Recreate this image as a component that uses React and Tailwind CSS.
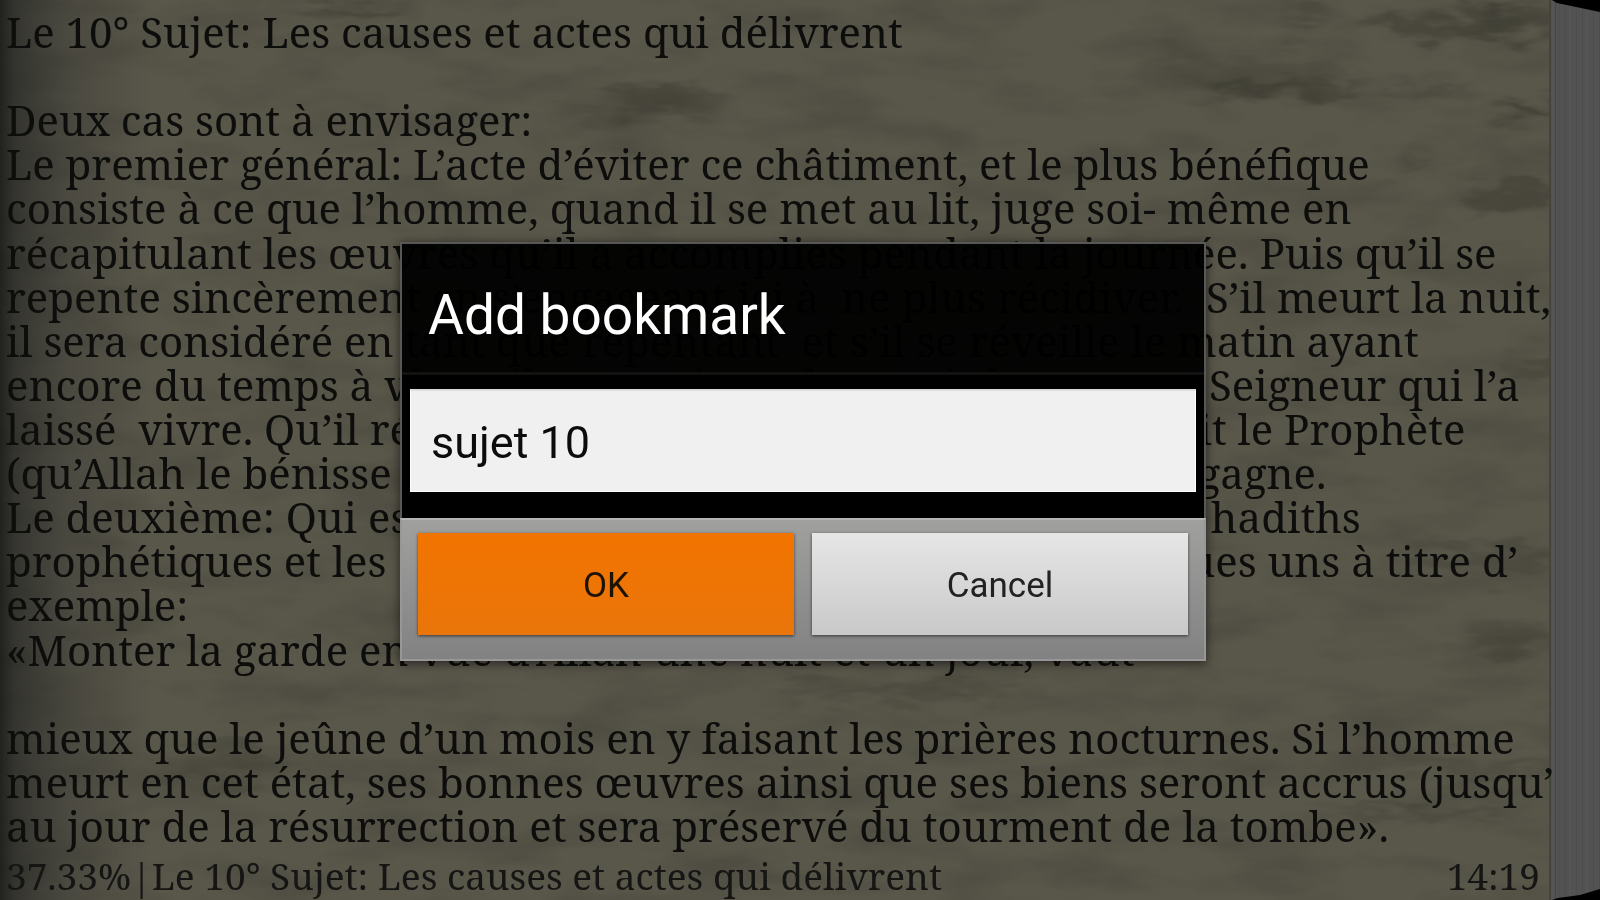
import React, { useState } from "react";

// Lines of the current page, already broken by the reader
const LINES = [
  "Le 10° Sujet: Les causes et actes qui délivrent",
  "",
  "Deux cas sont à envisager:",
  "Le premier général: L’acte d’éviter ce châtiment, et le plus bénéfique",
  "consiste à ce que l’homme, quand il se met au lit, juge soi- même en",
  "récapitulant les œuvres qu’il a accomplies pendant la journée. Puis qu’il se",
  "repente sincèrement en s’engageant ici à  ne plus récidiver.  S’il meurt la nuit,",
  "il sera considéré en tant que repentant  et s’il se réveille le matin ayant",
  "encore du temps à vivre, il remerciera alors puis louera son Seigneur qui l’a",
  "laissé  vivre. Qu’il récite les bonnes invocations comme disait le Prophète",
  "(qu’Allah le bénisse et le salue) au coucher, et au réveil, et il gagne.",
  "Le deuxième: Qui est  plus détaillé, cité et rapporté  dans les hadiths",
  "prophétiques et les  récits très rapportés. Nous citons quelques uns à titre d’",
  "exemple:",
  "«Monter la garde en vue d’Allah une nuit et un jour, vaut",
  "",
  "mieux que le jeûne d’un mois en y faisant les prières nocturnes. Si l’homme",
  "meurt en cet état, ses bonnes œuvres ainsi que ses biens seront accrus (jusqu’",
  "au jour de la résurrection et sera préservé du tourment de la tombe».",
];

// Dark stains of the paper: [cx, cy, rx, ry, opacity]
const STAINS = [
  [660, 98, 50, 14, 0.36],
  [640, 114, 90, 10, 0.16],
  [1290, 90, 80, 10, 0.36],
  [1250, 72, 90, 20, 0.2],
  [1440, 24, 80, 12, 0.36],
  [1530, 22, 40, 18, 0.36],
  [1530, 108, 40, 8, 0.4],
  [1430, 90, 40, 5, 0.26],
  [1415, 164, 18, 4, 0.4],
  [1515, 195, 50, 12, 0.34],
  [350, 8, 60, 8, 0.3],
  [1310, 18, 24, 5, 0.3],
  [1540, 365, 40, 5, 0.34],
  [1480, 560, 80, 14, 0.24],
  [1510, 640, 50, 14, 0.24],
  [1480, 765, 90, 10, 0.2],
  [230, 765, 60, 18, 0.22],
  [1420, 812, 100, 5, 0.28],
  [900, 690, 130, 10, 0.2],
];

function Paper() {
  return (
    <svg
      aria-hidden="true"
      className="absolute inset-0 h-full w-full"
      viewBox="0 0 1600 900"
      preserveAspectRatio="none"
    >
      <defs>
        <filter id="grain" x="0" y="0" width="100%" height="100%" colorInterpolationFilters="sRGB">
          <feTurbulence type="fractalNoise" baseFrequency="0.009 0.028" numOctaves="4" seed="7" />
          <feColorMatrix values="0 0 0 0 0.16  0 0 0 0 0.17  0 0 0 0 0.13  2.4 0 0 0 -1.05" />
        </filter>
        <filter id="soft" x="-50%" y="-50%" width="200%" height="200%" colorInterpolationFilters="sRGB">
          <feTurbulence type="fractalNoise" baseFrequency="0.02 0.06" numOctaves="3" seed="3" result="noise" />
          <feGaussianBlur in="SourceGraphic" stdDeviation="12 5" result="blur" />
          <feDisplacementMap in="blur" in2="noise" scale="50" xChannelSelector="R" yChannelSelector="G" />
        </filter>
        <linearGradient id="fold">
          <stop offset="0" stopColor="#141514" stopOpacity="0.8" />
          <stop offset="0.1" stopColor="#1e201f" stopOpacity="0.6" />
          <stop offset="0.45" stopColor="#282a29" stopOpacity="0.28" />
          <stop offset="1" stopColor="#2a2a28" stopOpacity="0" />
        </linearGradient>
        <pattern id="leaves" width="17" height="10" patternUnits="userSpaceOnUse">
          <rect width="17" height="10" fill="#525252" />
          <rect x="1" width="1" height="10" fill="#4d4d4d" />
          <rect x="5" width="2" height="10" fill="#555555" />
          <rect x="12" width="1" height="10" fill="#4e4e4e" />
        </pattern>
      </defs>
      <rect width="1600" height="900" fill="#59564a" />
      <rect width="1600" height="900" filter="url(#grain)" opacity="0.2" />
      <g filter="url(#soft)" fill="#2c2c24">
        {STAINS.map(([cx, cy, rx, ry, opacity]) => (
          <ellipse key={`${cx}-${cy}`} cx={cx} cy={cy} rx={rx} ry={ry} opacity={opacity} />
        ))}
      </g>
      <rect width="150" height="900" fill="url(#fold)" />
      <rect x="1550" width="50" height="900" fill="url(#leaves)" />
      <rect x="1549" width="2" height="900" fill="#44443f" />
      <rect x="1555" width="1" height="900" fill="#454545" />
      <path d="M1552 0 L1600 0 L1600 12 L1557 3 Z" fill="#000" />
      <path d="M1552 900 L1558 898 L1580 895 L1600 889 L1600 900 Z" fill="#000" />
    </svg>
  );
}

function BookmarkDialog() {
  const [name, setName] = useState("sujet 10");

  return (
    <form
      role="dialog"
      aria-labelledby="dialog-title"
      onSubmit={(e) => e.preventDefault()}
      className="w-[806px] max-w-full font-['Roboto',sans-serif] shadow-[0_2px_10px_rgba(0,0,0,0.6)]"
    >
      <div className="border-x-2 border-t-2 border-[#575755] bg-black/95">
        <h1
          id="dialog-title"
          className="flex h-32 items-center pt-4 pl-[26px] text-[55px] text-white"
        >
          Add bookmark
        </h1>
        <div className="border-t-[3px] border-[#121211] bg-black px-2 pt-[14px] pb-[26px]">
          <input
            type="text"
            aria-labelledby="dialog-title"
            value={name}
            onChange={(e) => setName(e.target.value)}
            className="block h-[103px] w-full border border-t-2 border-white border-t-[#dcdcdc] bg-[#f0f0f0] px-5 pt-1 text-[45px] text-[#0c0c0c] outline-none"
          />
        </div>
      </div>
      <div className="grid grid-cols-2 gap-[18px] border-2 border-[#979797] border-t-[#b4b4b2] bg-linear-to-b from-[#a0a09f] to-[#828282] px-4 pt-[13px] pb-6">
        <button
          type="submit"
          className="h-[102px] bg-linear-to-b from-[#f27400] to-[#ea750a] pt-1.5 text-[35px] text-[#1d1206] shadow-[0_1px_3px_rgba(0,0,0,0.6)]"
        >
          OK
        </button>
        <button
          type="button"
          className="h-[102px] bg-linear-to-b from-[#e6e6e6] to-[#c9c9c9] pt-1.5 text-[35px] text-[#222222] shadow-[0_1px_3px_rgba(0,0,0,0.6)]"
        >
          Cancel
        </button>
      </div>
    </form>
  );
}

export default function App() {
  return (
    <div className="relative flex min-h-screen flex-col overflow-hidden bg-[#59564a] font-['Noto_Serif',serif] text-[#0d0d0b]">
      <Paper />

      {/* Book page */}
      <main className="relative flex flex-1 flex-col justify-between pt-[10px] pb-1.5 pl-1.5 text-[42px] leading-[44px] whitespace-pre">
        {LINES.map((line, i) => (
          <p key={i} className="h-[44px]">
            {line}
          </p>
        ))}
      </main>

      {/* Reading status */}
      <footer className="relative flex justify-between pr-[60px] pb-0.5 pl-1.5 text-[37px] leading-[44px] text-[#151513]">
        <span>37.33%|Le 10° Sujet: Les causes et actes qui délivrent</span>
        <time>14:19</time>
      </footer>

      {/* Dialog over the page */}
      <div className="absolute inset-0 flex items-center justify-center pt-0.5 pl-1.5">
        <BookmarkDialog />
      </div>
    </div>
  );
}
